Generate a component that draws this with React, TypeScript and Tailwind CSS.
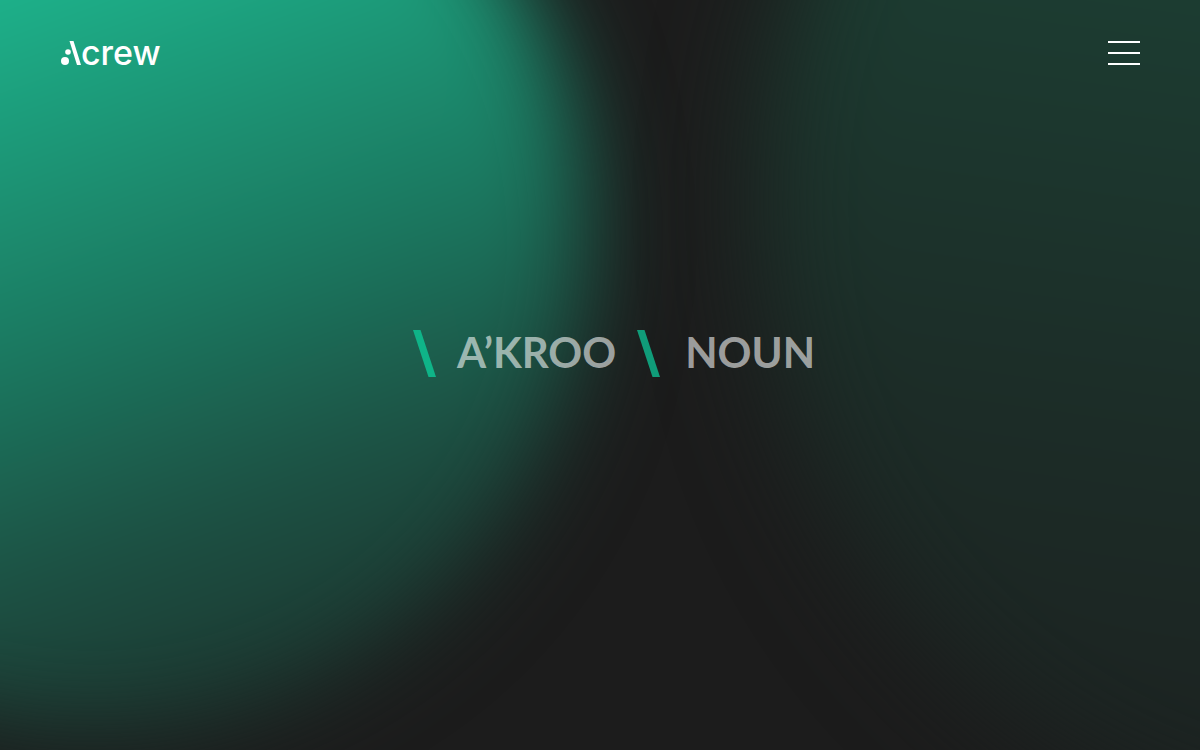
import React from "react";

function Backdrop() {
  return (
    <div aria-hidden="true" className="absolute inset-0 -z-10 overflow-hidden bg-[#1c1c1c]">
      <div className="absolute top-[-21vw] left-[-33vw] aspect-square w-[82vw] rounded-full bg-[linear-gradient(160deg,#1dc499_16%,#1db18a_29%,#1b775f_57%,#1c4f42_74%,#1c362f_90%,#1c2824_98%)] blur-[46px]" />
      <div className="absolute top-[-37vw] left-[63vw] aspect-square w-[108vw] rounded-full bg-[linear-gradient(188deg,#1b4637_20%,#1c3a30_42%,#1c2c27_68%,#1c2120_95%)] blur-[52px]" />
    </div>
  );
}

function Logo() {
  return (
    <a href="#" aria-label="Acrew" className="flex h-9 items-center text-white">
      <svg viewBox="0 0 21 24" className="h-6 w-[21px]" fill="currentColor" aria-hidden="true">
        <circle cx="5" cy="20" r="4" />
        <circle cx="8" cy="11" r="2.8" />
        <path d="M9.500 0h4l7.500 24h-4z" />
      </svg>
      <span className="font-[Inter,sans-serif] text-[34px] leading-9 font-medium">crew</span>
    </a>
  );
}

function Slash({ className }: { className: string }) {
  return (
    <svg viewBox="0 0 23 47" className={`h-[47px] w-[23px] ${className}`} fill="currentColor" aria-hidden="true">
      <path d="M0 0h7.500L23 47h-7.500z" />
    </svg>
  );
}

export default function App() {
  return (
    <div className="relative isolate flex min-h-screen flex-col">
      <Backdrop />
      <header className="flex h-[106px] items-center justify-between px-[60px]">
        <Logo />
        <button type="button" aria-label="Open menu" className="flex w-8 flex-col gap-[9px]">
          <span className="h-[2px] w-full bg-white" />
          <span className="h-[2px] w-full bg-white" />
          <span className="h-[2px] w-full bg-white" />
        </button>
      </header>
      <main className="flex flex-1 justify-center pt-[224px] pl-7">
        <h1 className="flex h-[47px] items-center font-[Lato,sans-serif] text-[42px] leading-[46px] font-bold text-white/58">
          <Slash className="text-[#0fb488]" />
          <span className="-mt-[3px] pl-[21px]">A’KROO</span>
          <Slash className="ml-[21px] text-[#109c79]" />
          <span className="-mt-[3px] pl-[25px]">NOUN</span>
        </h1>
      </main>
    </div>
  );
}
